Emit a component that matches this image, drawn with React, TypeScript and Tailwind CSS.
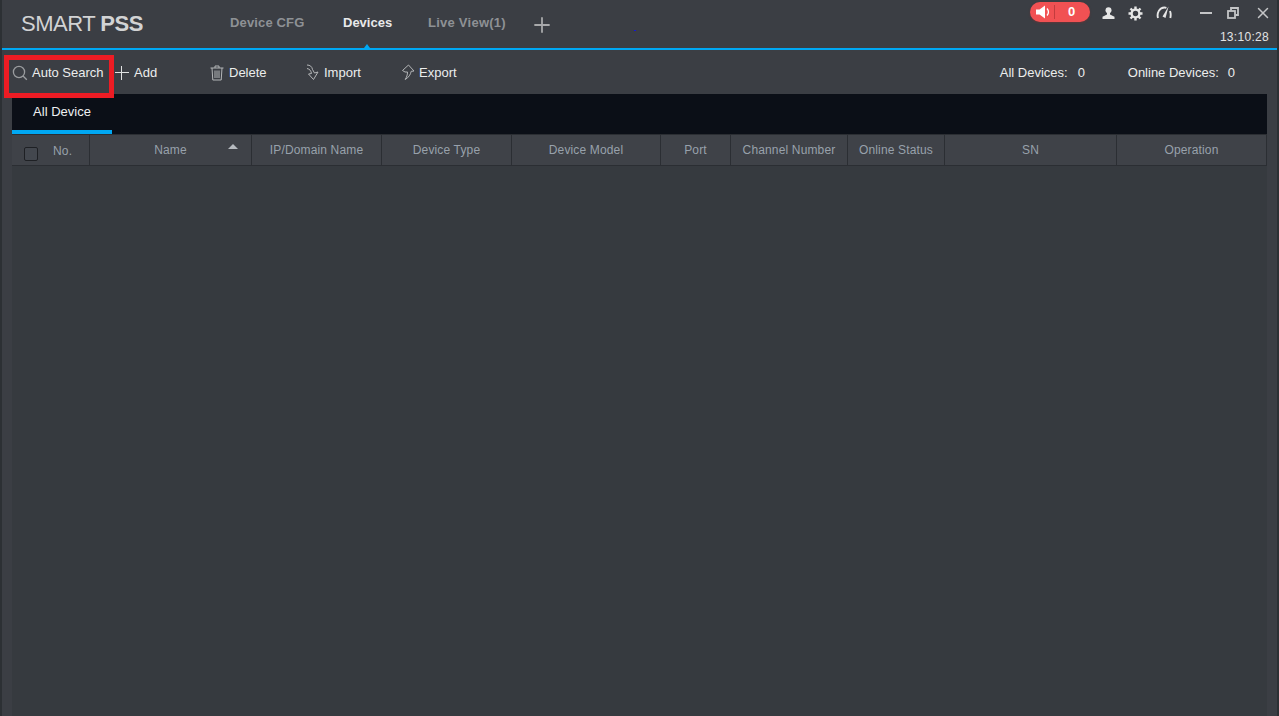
import { Plus, X } from "lucide-react";

const columns = [
  { label: "Name", width: "w-[162px]" },
  { label: "IP/Domain Name", width: "w-[130px]" },
  { label: "Device Type", width: "w-[130px]" },
  { label: "Device Model", width: "w-[149px]" },
  { label: "Port", width: "w-[70px]" },
  { label: "Channel Number", width: "w-[117px]" },
  { label: "Online Status", width: "w-[97px]" },
  { label: "SN", width: "w-[172px]" },
  { label: "Operation", width: "w-[150px]" },
];

function SearchIcon() {
  return (
    <svg width="16" height="16" viewBox="0 0 16 16" fill="none" stroke="#9a9c9f" strokeWidth="1.300">
      <circle cx="7" cy="7" r="5.600" />
      <path d="M11 11l3.800 3.800" />
    </svg>
  );
}

function AddIcon() {
  return (
    <svg width="14" height="14" viewBox="0 0 14 14" fill="none" stroke="#e0e1e2" strokeWidth="1">
      <path d="M0 6.500h14M6.500 0v14" />
    </svg>
  );
}

function TrashIcon() {
  return (
    <svg width="14" height="16" viewBox="0 0 14 16" fill="none" stroke="#b4b6b8" strokeWidth="1">
      <path d="M0.500 3h13M5 3V1h4v2M2 3l.8 12h8.400L12 3M5 5.500v7.500M7 5.500v7.500M9 5.500v7.500" />
    </svg>
  );
}

function ImportIcon() {
  return (
    <svg width="14" height="17" viewBox="0 0 14 17" fill="none" stroke="#b4b6b8" strokeWidth="1">
      <path d="M1 1c3 0 5 1.500 5.500 4.500L8.500 9l3.500-1-4.500 7.500L2.500 10l3-.5C5 7 4 5 1 4.500" />
    </svg>
  );
}

function ExportIcon() {
  return (
    <svg width="14" height="17" viewBox="0 0 14 17" fill="none" stroke="#b4b6b8" strokeWidth="1">
      <path d="M7.500 1 13 7l-2.800.3c-.5 3-2.600 6.300-6 8.200 1.500-2.500 2.300-4.500 2.300-7.500H4L1.500 6.500z" />
    </svg>
  );
}

function UserIcon() {
  return (
    <svg width="13" height="12" viewBox="0 0 13 12" fill="#e6e6e6">
      <circle cx="6.500" cy="3.200" r="3" />
      <path d="M5 5.500h3v2l4.500 2.200V12H.5V9.700L5 7.500z" />
    </svg>
  );
}

function GearIcon() {
  return (
    <svg width="15" height="15" viewBox="0 0 15 15" fill="none" stroke="#e6e6e6">
      <circle cx="7.500" cy="7.500" r="3.900" strokeWidth="2.400" />
      <path
        d="M7.500 .5v3M7.500 11.500v3M.5 7.500h3M11.500 7.500h3M2.500 2.500l2 2M10.500 10.500l2 2M12.500 2.500l-2 2M4.500 10.500l-2 2"
        strokeWidth="2.400"
      />
    </svg>
  );
}

function GaugeIcon() {
  return (
    <svg width="16" height="14" viewBox="0 0 16 14" fill="none" stroke="#e6e6e6" strokeWidth="1.900">
      <path d="M2 13C.5 8 3.500 2.500 8.500 2.500c.8 0 1.300.1 1.900.3M14 6c.8 2 .8 5 .3 7" />
      <path d="M6.500 11.500 12.500 1.500 9.500 13z" fill="#e6e6e6" stroke="none" />
    </svg>
  );
}

function SpeakerIcon() {
  return (
    <svg width="15" height="14" viewBox="0 0 15 14" fill="#ffffff">
      <path d="M0 4.500h3.500L9 .5v13l-5.500-4H0z" />
      <path d="M11 3.500c1.700 2 1.700 5 0 7" fill="none" stroke="#ffffff" strokeWidth="1.300" />
    </svg>
  );
}

function RestoreIcon() {
  return (
    <svg width="12" height="12" viewBox="0 0 12 12" fill="none" stroke="#c4c5c7" strokeWidth="1.800">
      <rect x="1" y="4" width="7" height="7" />
      <path d="M4 3.500V1h7v7H8.500" />
    </svg>
  );
}

function ToolButton({ icon, label, className }: { icon: React.ReactNode; label: string; className: string }) {
  return (
    <div className={`flex items-center ${className}`}>
      {icon}
      <span>{label}</span>
    </div>
  );
}

export default function App() {
  return (
    <div className="relative flex h-[716px] w-[1279px] flex-col overflow-hidden border-x-2 border-x-[#2c3034] bg-[#3b3e44] font-['Liberation_Sans',Arial,sans-serif]">
      {/* Title bar */}
      <header className="flex h-[48px] items-start">
        <div className="mt-[10px] ml-[19px] w-[207px] text-[22px] leading-[28px] tracking-[-0.5px] text-[#d2d3d4]">
          SMART <span className="font-bold">PSS</span>
        </div>
        <nav className="mt-[8px] flex items-center text-[13px] leading-[16px] font-bold">
          <span className="w-[115px] pl-[2px] tracking-[0.15px] text-[#8e9195]">Device CFG</span>
          <span className="w-[85px] text-[#e8e9ea]">Devices</span>
          <span className="w-[103px] tracking-[0.25px] text-[#8e9195]">Live View(1)</span>
          <Plus size={24} strokeWidth={1.800} className="mt-[5px] -ml-[1px] text-[#a8a9ab]" />
        </nav>
        <div className="ml-auto flex w-[250px] flex-col items-end">
          <div className="mt-[2px] flex h-[20px] items-start">
            <div className="flex h-[20px] w-[60px] items-center rounded-full bg-[#f15153] pl-[6px] shadow-[0_1px_2px_rgba(120,50,50,0.6)]">
              <SpeakerIcon />
              <div className="ml-[3px] h-[14px] w-px bg-[#c33c3e]" />
              <span className="ml-[13px] text-[13px] font-bold text-white">0</span>
            </div>
            <div className="mt-[5px] ml-[12px]"><UserIcon /></div>
            <div className="mt-[4px] ml-[13px]"><GearIcon /></div>
            <div className="mt-[3px] ml-[13px]"><GaugeIcon /></div>
            <svg width="12" height="2" viewBox="0 0 12 2" className="mt-[10px] ml-[28px]">
              <rect width="12" height="2" fill="#c4c5c7" />
            </svg>
            <div className="mt-[5px] ml-[15px]"><RestoreIcon /></div>
            <X size={18} strokeWidth={2} className="mt-[2px] mr-[5px] ml-[15px] text-[#c4c5c7]" />
          </div>
          <span className="mt-[8px] mr-[8px] text-[12px] leading-[14px] tracking-[0.3px] text-[#e2e3e4]">13:10:28</span>
        </div>
      </header>
      <div className="relative h-[2px] bg-[#00a8f3]">
        <div className="absolute -top-[4px] left-[362px] h-0 w-0 border-x-[3px] border-b-[4px] border-x-transparent border-b-[#00a8f3]" />
      </div>

      {/* Toolbar */}
      <div className="flex h-[44px] items-center pt-[1px] text-[13px] text-[#eceded]">
        <ToolButton className="ml-[10px] w-[103px] gap-[4px]" icon={<SearchIcon />} label="Auto Search" />
        <ToolButton className="w-[95px] gap-[5px]" icon={<AddIcon />} label="Add" />
        <ToolButton className="w-[96px] gap-[5px]" icon={<TrashIcon />} label="Delete" />
        <ToolButton className="w-[95px] gap-[4px]" icon={<ImportIcon />} label="Import" />
        <ToolButton className="gap-[4px]" icon={<ExportIcon />} label="Export" />
        <div className="ml-auto flex pr-[42px]">
          <span className="w-[78px] whitespace-nowrap">All Devices:</span>
          <span className="w-[50px]">0</span>
          <span className="w-[100px] whitespace-nowrap">Online Devices:</span>
          <span>0</span>
        </div>
      </div>

      {/* Table */}
      <main className="mx-[10px] flex flex-1 flex-col bg-[#363a3f]">
        <div className="flex h-[40px] bg-[#0b0f17]">
          <div className="flex h-[40px] w-[100px] items-center justify-center border-b-[4px] text-[13px] text-[#eef0f1] border-[#00a8f3]">
            All Device
          </div>
        </div>
        <div className="flex h-[32px] border-y border-y-[#2b2e33] bg-[#3f4248] text-[12px] tracking-[0.15px] text-[#98a1ab]">
          <div className="flex w-[78px] items-center border-r border-[#2b2e33] pl-[12px]">
            <div className="mt-[7px] h-[14px] w-[14px] rounded-[2px] border border-[#1e2024] bg-[#43474e]" />
            <span className="mt-[1px] ml-[15px]">No.</span>
          </div>
          {columns.map((col) => (
            <div
              key={col.label}
              className={`relative flex ${col.width} items-center justify-center border-r border-[#2b2e33]`}
            >
              {col.label}
              {col.label === "Name" && (
                <div className="absolute top-[9px] right-[13px] h-0 w-0 border-x-[5px] border-b-[5px] border-x-transparent border-b-[#b6babf]" />
              )}
            </div>
          ))}
        </div>
        <div className="flex-1" />
      </main>

      {/* Red annotation box and the stray blue pixel above the line */}
      <div className="absolute top-[55px] left-[2px] h-[43px] w-[110px] border-[5px] border-[#ed1c24]" />
      <div className="absolute top-[30px] left-[632px] h-[1px] w-[2px] bg-[#1414d8]" />
    </div>
  );
}
